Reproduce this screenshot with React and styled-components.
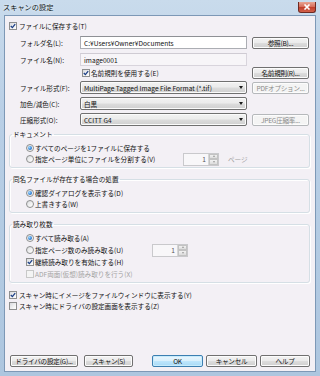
import React from "react";
import styled, { createGlobalStyle } from "styled-components";

const GlobalStyle = createGlobalStyle`
  html, body {
    margin: 0;
    padding: 0;
  }
  body {
    font-family: "Noto Sans CJK JP", "Noto Sans", sans-serif;
    font-size: 6.6px;
    color: #111;
  }
`;

const Window = styled.div`
  width: 320px;
  height: 376px;
  box-sizing: border-box;
  display: flex;
  flex-direction: column;
  overflow: hidden;
  background: linear-gradient(to bottom, #c9dbec 0%, #b9cfe6 30%, #adc6df 100%);
`;

const TitleBar = styled.div`
  flex: none;
  height: 15px;
  display: flex;
  align-items: center;
  justify-content: space-between;
  padding: 0 4px 0 3px;
`;

const Title = styled.span`
  font-size: 7.2px;
  line-height: 15px;
  color: #101820;
  text-shadow: 0 0 3px #fff;
`;

const CloseButton = styled.div`
  width: 18px;
  height: 11px;
  box-sizing: border-box;
  margin-top: -1px;
  border: 1px solid #6e2a22;
  border-top: none;
  border-radius: 0 0 3px 3px;
  background: linear-gradient(to bottom, #e8a493 0%, #d7705e 45%, #c2402c 55%, #d2604a 100%);
  display: flex;
  align-items: center;
  justify-content: center;
`;

const Body = styled.div`
  flex: 1;
  min-height: 0;
  margin: 0 4px 4px;
  box-sizing: border-box;
  background: #f3f0f5;
  border: 1px solid #7d98b6;
  display: flex;
  flex-direction: column;
  padding: 5px 5px 4px 4px;
`;

const CheckRow = styled.label`
  display: flex;
  align-items: center;
  gap: ${p => p.$gap ?? 2}px;
  height: 10px;
  margin-left: ${p => p.$ml ?? 0}px;
  white-space: nowrap;
  color: ${p => (p.$disabled ? "#a3a3a3" : "inherit")};
`;

const CheckBox = styled.span`
  flex: none;
  width: 8px;
  height: 8px;
  box-sizing: border-box;
  border: 1px solid ${p => (p.$disabled ? "#c8c8c8" : "#8e8f8f")};
  background: ${p =>
    p.$disabled ? "#f4f4f4" : "linear-gradient(135deg, #d9dbde 0%, #f6f6f6 70%, #fff 100%)"};
  display: flex;
  align-items: center;
  justify-content: center;
`;

const RadioDot = styled.span`
  flex: none;
  width: 8px;
  height: 8px;
  box-sizing: border-box;
  border-radius: 50%;
  border: 1px solid #8e8f8f;
  background: linear-gradient(135deg, #d9dbde 0%, #f7f7f7 70%, #fff 100%);
  display: flex;
  align-items: center;
  justify-content: center;

  &::after {
    content: "";
    display: ${p => (p.$on ? "block" : "none")};
    width: 4px;
    height: 4px;
    border-radius: 50%;
    background: radial-gradient(circle at 35% 35%, #a6dcff 0%, #3d8ee0 50%, #1a4f9c 100%);
  }
`;

const Fields = styled.div`
  display: flex;
  flex-direction: column;
  margin-left: 11px;
`;

const FieldRow = styled.div`
  display: grid;
  grid-template-columns: 55px 167px 57px;
  column-gap: 5px;
  align-items: center;
  height: ${p => p.$h ?? 13}px;
  margin-top: ${p => p.$mt}px;
`;

const Label = styled.span`
  white-space: nowrap;
`;

const TextInput = styled.div`
  height: 13px;
  box-sizing: border-box;
  border: 1px solid ${p => (p.$soft ? "#d8d4dc" : "#abadb3")};
  border-top-color: ${p => (p.$soft ? "#cfcbd3" : "#8e9095")};
  background: ${p => (p.$soft ? "#f7f5f8" : "#fff")};
  padding-left: 3px;
  display: flex;
  align-items: center;
  white-space: nowrap;
  overflow: hidden;
`;

const Select = styled.div`
  height: 13px;
  box-sizing: border-box;
  border: 1px solid #707070;
  border-radius: 2px;
  background: linear-gradient(to bottom, #f2f2f2 0%, #ebebeb 49%, #dddddd 51%, #cfcfcf 100%);
  box-shadow: inset 0 0 0 1px #fbfbfb;
  padding: 0 3px 0 3px;
  display: flex;
  align-items: center;
  justify-content: space-between;
  white-space: nowrap;
  overflow: hidden;

  &::after {
    content: "";
    flex: none;
    width: 0;
    height: 0;
    border-left: 2.5px solid transparent;
    border-right: 2.5px solid transparent;
    border-top: 3px solid #1a1a1a;
  }
`;

const Button = styled.button`
  font: inherit;
  letter-spacing: -0.25px;
  padding: 0;
  margin: 0;
  width: ${p => (p.$w ? `${p.$w}px` : "100%")};
  height: 12px;
  box-sizing: border-box;
  border: 1px solid ${p => (p.$disabled ? "#b5b8bb" : p.$default ? "#3c7fb1" : "#707070")};
  border-radius: 2px;
  background: ${p =>
    p.$disabled
      ? "#f4f4f4"
      : p.$default
      ? "linear-gradient(to bottom, #eaf6fd 0%, #d9f0fc 49%, #bee6fd 51%, #a7d9f5 100%)"
      : "linear-gradient(to bottom, #f2f2f2 0%, #ebebeb 49%, #dddddd 51%, #cfcfcf 100%)"};
  box-shadow: inset 0 0 0 1px ${p => (p.$default ? "#c7ecfc" : "#fcfcfc")};
  color: ${p => (p.$disabled ? "#8a8a8a" : "#111")};
  display: flex;
  align-items: center;
  justify-content: center;
  white-space: nowrap;
  overflow: hidden;
`;

const Group = styled.fieldset`
  margin: ${p => p.$mt}px 0 0;
  min-width: 0;
  padding: 5px 0 3px 2px;
  border: 1px solid #d5dfe5;
  border-radius: 3px;
  box-shadow: inset 1px 1px 0 #fff, 1px 1px 0 #fff;
`;

const Legend = styled.legend`
  padding: 0 1px;
  line-height: 8px;
  font-size: 6.6px;
`;

const GroupRows = styled.div`
  display: flex;
  flex-direction: column;
  gap: ${p => p.$gap}px;
  margin-left: 14px;
`;

const OptionRow = styled.div`
  display: flex;
  align-items: center;
  height: 10px;
`;

const Option = styled.label`
  display: flex;
  align-items: center;
  gap: 1px;
  width: ${p => (p.$w ? `${p.$w}px` : "auto")};
  flex: none;
  white-space: nowrap;
  color: ${p => (p.$disabled ? "#a3a3a3" : "inherit")};
`;

const Spinner = styled.div`
  flex: none;
  width: 36px;
  height: 13px;
  box-sizing: border-box;
  border: 1px solid #c9c9cc;
  background: #f8f7f9;
  display: flex;
`;

const SpinValue = styled.span`
  flex: 1;
  text-align: right;
  padding-right: 2px;
  line-height: 11px;
  color: #555;
`;

const SpinButtons = styled.div`
  width: 9px;
  display: flex;
  flex-direction: column;
  border-left: 1px solid #d6d6d6;
`;

const SpinHalf = styled.div`
  flex: 1;
  background: linear-gradient(to bottom, #f2f2f2, #dcdcdc);
  border: 1px solid #c3c3c3;
  display: flex;
  align-items: center;
  justify-content: center;

  &::after {
    content: "";
    width: 0;
    height: 0;
    border-left: 1.5px solid transparent;
    border-right: 1.5px solid transparent;
    ${p => (p.$up ? "border-bottom" : "border-top")}: 2px solid #9a9a9a;
  }
`;

const Unit = styled.span`
  margin-left: 9px;
  color: #a3a3a3;
`;

const BottomChecks = styled.div`
  display: flex;
  flex-direction: column;
  gap: 1px;
  margin-top: 7px;
`;

const ButtonBar = styled.div`
  margin-top: auto;
  display: flex;
  justify-content: space-between;
  padding-left: 1px;
`;

const ButtonGroup = styled.div`
  display: flex;
  gap: ${p => p.$gap}px;
`;

const Check = ({ checked, disabled }) => (
  <CheckBox $disabled={disabled}>
    {checked && (
      <svg width="6" height="6" viewBox="0 0 6 6">
        <path d="M0.8 3 L2.4 4.6 L5.2 1.1" fill="none" stroke="#1c3f86" strokeWidth="1.3" />
      </svg>
    )}
  </CheckBox>
);

const Spin = () => (
  <Spinner>
    <SpinValue>1</SpinValue>
    <SpinButtons>
      <SpinHalf $up />
      <SpinHalf />
    </SpinButtons>
  </Spinner>
);

const App = () => (
  <>
    <GlobalStyle />
    <Window>
      <TitleBar>
        <Title>スキャンの設定</Title>
        <CloseButton>
          <svg width="8" height="6" viewBox="0 0 8 6">
            <path d="M1.5 0.5 L6.5 5.5 M6.5 0.5 L1.5 5.5" stroke="#fff" strokeWidth="1.6" />
          </svg>
        </CloseButton>
      </TitleBar>

      <Body>
        <CheckRow>
          <Check checked />
          ファイルに保存する(T)
        </CheckRow>

        <Fields>
          <FieldRow $mt={5}>
            <Label>フォルダ名(L):</Label>
            <TextInput>C:¥Users¥Owner¥Documents</TextInput>
            <Button>参照(B)...</Button>
          </FieldRow>
          <FieldRow $mt={4}>
            <Label>ファイル名(N):</Label>
            <TextInput $soft>image0001</TextInput>
          </FieldRow>
          <FieldRow $mt={1} $h={12}>
            <span />
            <CheckRow $gap={1} $ml={2}>
              <Check checked />
              名前規則を使用する(E)
            </CheckRow>
            <Button>名前規則(R)...</Button>
          </FieldRow>
          <FieldRow $mt={2}>
            <Label>ファイル形式(F):</Label>
            <Select>MultiPage Tagged Image File Format (*.tif)</Select>
            <Button $disabled>PDFオプション...</Button>
          </FieldRow>
          <FieldRow $mt={3}>
            <Label>加色/減色(C):</Label>
            <Select>白黒</Select>
          </FieldRow>
          <FieldRow $mt={3}>
            <Label>圧縮形式(O):</Label>
            <Select>CCITT G4</Select>
            <Button $disabled>JPEG圧縮率...</Button>
          </FieldRow>
        </Fields>

        <Group $mt={4}>
          <Legend>ドキュメント</Legend>
          <GroupRows $gap={1}>
            <OptionRow>
              <Option>
                <RadioDot $on />
                すべてのページを1ファイルに保存する
              </Option>
            </OptionRow>
            <OptionRow>
              <Option $w={157}>
                <RadioDot />
                指定ページ単位にファイルを分割する(V)
              </Option>
              <Spin />
              <Unit>ページ</Unit>
            </OptionRow>
          </GroupRows>
        </Group>

        <Group $mt={7}>
          <Legend>同名ファイルが存在する場合の処置</Legend>
          <GroupRows $gap={1}>
            <OptionRow>
              <Option>
                <RadioDot $on />
                確認ダイアログを表示する(D)
              </Option>
            </OptionRow>
            <OptionRow>
              <Option>
                <RadioDot />
                上書きする(W)
              </Option>
            </OptionRow>
          </GroupRows>
        </Group>

        <Group $mt={7}>
          <Legend>読み取り枚数</Legend>
          <GroupRows $gap={2}>
            <OptionRow>
              <Option>
                <RadioDot $on />
                すべて読み取る(A)
              </Option>
            </OptionRow>
            <OptionRow>
              <Option $w={126}>
                <RadioDot />
                指定ページ数のみ読み取る(U)
              </Option>
              <Spin />
            </OptionRow>
            <OptionRow>
              <Option>
                <Check checked />
                継続読み取りを有効にする(H)
              </Option>
            </OptionRow>
            <OptionRow>
              <Option $disabled>
                <Check disabled />
                ADF両面(仮想)読み取りを行う(X)
              </Option>
            </OptionRow>
          </GroupRows>
        </Group>

        <BottomChecks>
          <CheckRow>
            <Check checked />
            スキャン時にイメージをファイルウィンドウに表示する(Y)
          </CheckRow>
          <CheckRow>
            <Check />
            スキャン時にドライバの設定画面を表示する(Z)
          </CheckRow>
        </BottomChecks>

        <ButtonBar>
          <ButtonGroup $gap={6}>
            <Button $w={68}>ドライバの設定(G)...</Button>
            <Button $w={49}>スキャン(S)</Button>
          </ButtonGroup>
          <ButtonGroup $gap={3}>
            <Button $w={51} $default>OK</Button>
            <Button $w={51}>キャンセル</Button>
            <Button $w={50}>ヘルプ</Button>
          </ButtonGroup>
        </ButtonBar>
      </Body>
    </Window>
  </>
);

export default App;
